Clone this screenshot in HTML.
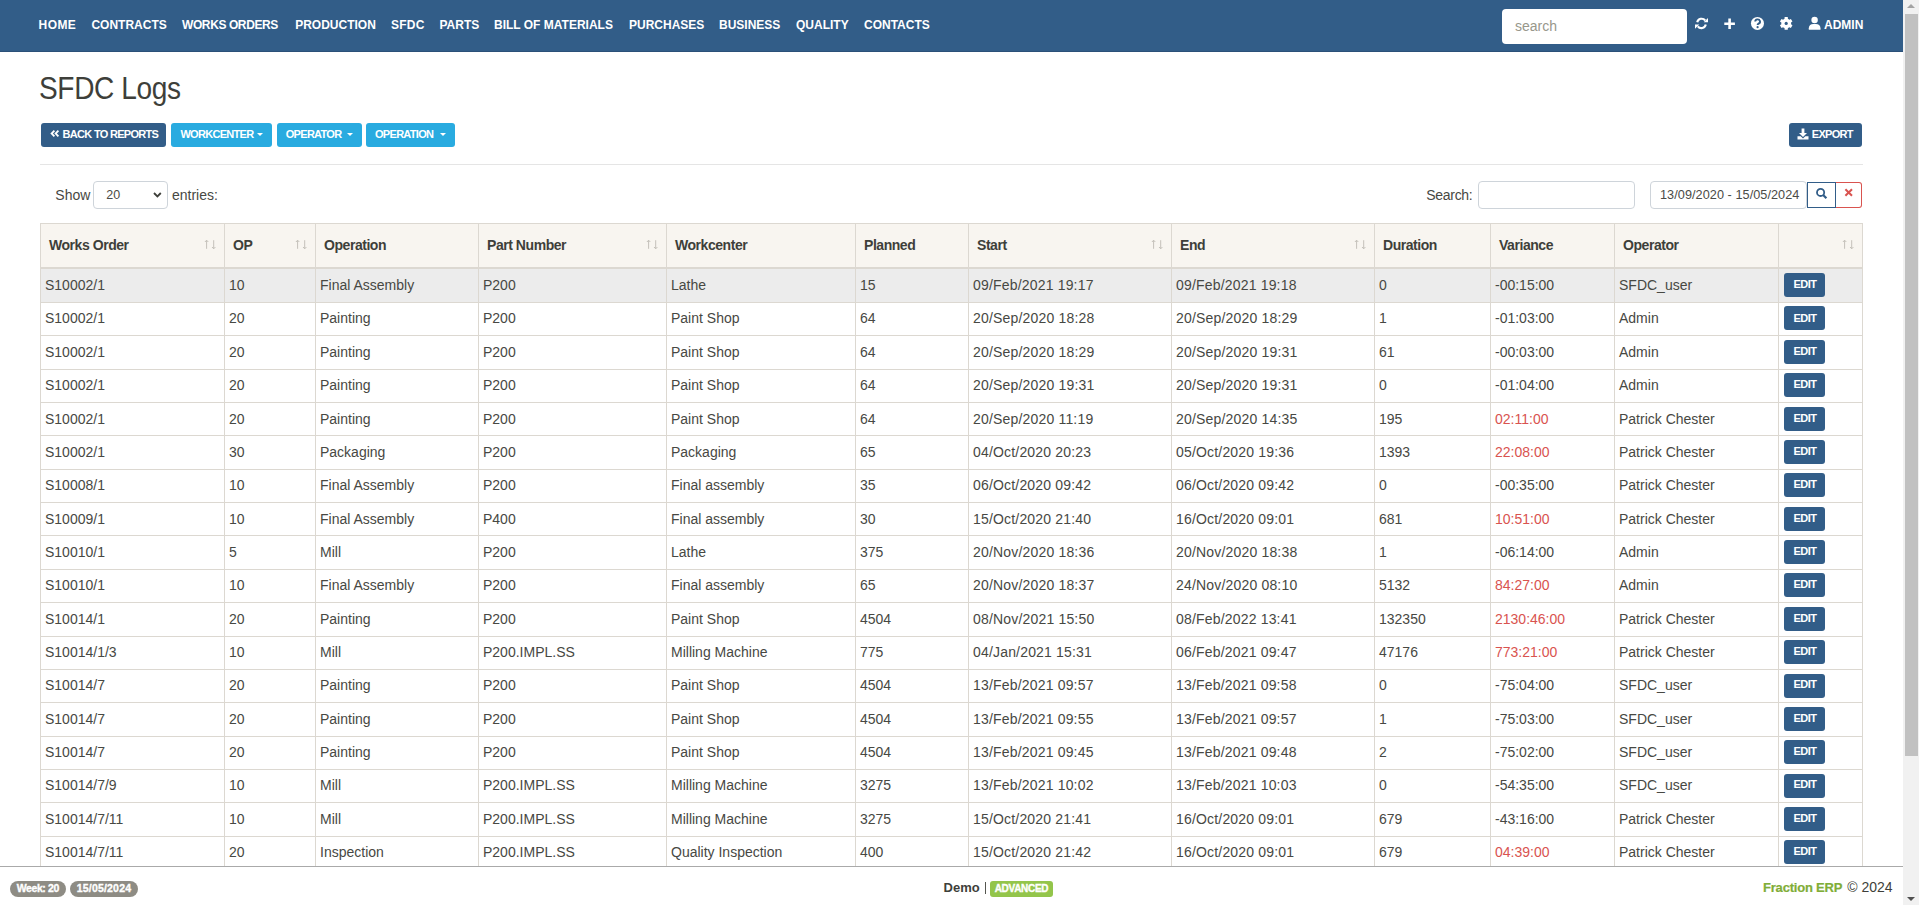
<!DOCTYPE html>
<html><head><meta charset="utf-8"><title>SFDC Logs</title>
<style>
html,body{margin:0;padding:0;}
body{width:1919px;height:905px;overflow:hidden;position:relative;background:#fff;font-family:"Liberation Sans",sans-serif;color:#3e3f3a;}
.t{position:absolute;white-space:nowrap;}
.b{font-weight:bold;}
.nav{position:absolute;left:0;top:0;width:1903px;height:51px;background:#325d88;border-bottom:1px solid #2b5078;}
.nl{color:#fff;font-weight:bold;}
.ln{position:absolute;background:#dcd8d1;}
.btn{position:absolute;border-radius:3px;color:#fff;font-weight:bold;font-size:11px;}
.edit{position:absolute;left:1784px;width:41px;height:24px;border-radius:3px;background:#325d88;}
.red{color:#d9534f;}
.sb{position:absolute;left:1903px;top:0;width:16px;height:905px;background:#f1f1f1;}
</style></head><body>

<div class="nav"></div>
<div class="t nl" style="left:38.6px;top:16.64px;font-size:12px;line-height:16px;letter-spacing:0.4px;">HOME</div>
<div class="t nl" style="left:91.4px;top:16.64px;font-size:12px;line-height:16px;">CONTRACTS</div>
<div class="t nl" style="left:182px;top:16.64px;font-size:12px;line-height:16px;letter-spacing:-0.4px;">WORKS ORDERS</div>
<div class="t nl" style="left:295.2px;top:16.64px;font-size:12px;line-height:16px;">PRODUCTION</div>
<div class="t nl" style="left:391px;top:16.64px;font-size:12px;line-height:16px;letter-spacing:0.25px;">SFDC</div>
<div class="t nl" style="left:439.5px;top:16.64px;font-size:12px;line-height:16px;">PARTS</div>
<div class="t nl" style="left:494px;top:16.64px;font-size:12px;line-height:16px;">BILL OF MATERIALS</div>
<div class="t nl" style="left:629px;top:16.64px;font-size:12px;line-height:16px;">PURCHASES</div>
<div class="t nl" style="left:719px;top:16.64px;font-size:12px;line-height:16px;">BUSINESS</div>
<div class="t nl" style="left:796px;top:16.64px;font-size:12px;line-height:16px;">QUALITY</div>
<div class="t nl" style="left:864px;top:16.64px;font-size:12px;line-height:16px;">CONTACTS</div>
<div style="position:absolute;left:1502px;top:9px;width:185px;height:35px;background:#fff;border-radius:4px;"></div>
<div class="t " style="left:1515px;top:17.15px;font-size:14px;line-height:18px;color:#98978b;">search</div>
<div class="t nl" style="left:1824px;top:16.64px;font-size:12px;line-height:16px;">ADMIN</div>
<svg style="position:absolute;left:0;top:0" width="1903" height="51">
<g fill="#fff">
 <path d="M1730.9 18.4h-2.6v4h-4v2.6h4v4h2.6v-4h4v-2.6h-4z"/>
 <circle cx="1757.45" cy="23.4" r="6.5"/>
 <path d="M1783.75 19.16 L1784.52 18.80 L1784.63 17.09 L1787.77 17.09 L1787.88 18.80 L1788.65 19.16 L1789.35 19.65 L1790.88 18.88 L1792.45 21.61 L1791.03 22.55 L1791.10 23.40 L1791.03 24.25 L1792.45 25.19 L1790.88 27.92 L1789.35 27.15 L1788.65 27.64 L1787.88 28.00 L1787.77 29.71 L1784.63 29.71 L1784.52 28.00 L1783.75 27.64 L1783.05 27.15 L1781.52 27.92 L1779.95 25.19 L1781.37 24.25 L1781.30 23.40 L1781.37 22.55 L1779.95 21.61 L1781.52 18.88 L1783.05 19.65Z"/>
 <circle cx="1814.6" cy="20" r="3.2"/>
 <path d="M1808.8 29.8v-1.6c0-2.6 2-4.2 4.5-4.2h2.6c2.5 0 4.6 1.6 4.6 4.2v1.6z"/>
</g>
<circle cx="1786.2" cy="23.4" r="1.6" fill="#325d88"/>
<g fill="none" stroke="#fff" stroke-width="2.1">
 <path d="M1697.2 22.3a4.5 4.5 0 0 1 8-1.8M1705.8 24.5a4.5 4.5 0 0 1-8 1.8"/>
</g>
<path d="M1708 18v4.3h-4.3z M1695 28.8v-4.3h4.3z" fill="#fff"/>
<path d="M1755.2 21.6a2.4 2.2 0 1 1 3.4 2c-.8.4-1 .8-1 1.5" fill="none" stroke="#325d88" stroke-width="1.9"/>
<circle cx="1757.6" cy="27.2" r="1.1" fill="#325d88"/>
</svg>
<div class="t " style="left:39px;top:68.86px;font-size:31px;line-height:40px;letter-spacing:-0.4px;transform:scaleX(0.905);transform-origin:0 0;">SFDC Logs</div>
<div class="btn" style="left:41px;top:123px;width:125px;height:24px;background:#325d88;"></div>
<div class="t nl" style="left:62.6px;top:127.39px;font-size:11px;line-height:14px;letter-spacing:-0.7px;">BACK TO REPORTS</div>
<svg style="position:absolute;left:50px;top:129px" width="10" height="10"><path d="M4.4 1.6L1.6 4.5 4.4 7.4M8.4 1.6L5.6 4.5 8.4 7.4" fill="none" stroke="#fff" stroke-width="1.8"/></svg>
<div class="btn" style="left:171px;top:123px;width:101px;height:24px;background:#29abe0;"></div>
<div class="t nl" style="left:180.4px;top:127.39px;font-size:11px;line-height:14px;letter-spacing:-0.7px;">WORKCENTER</div>
<div style="position:absolute;left:257px;top:133px;width:0;height:0;border-left:3px solid transparent;border-right:3px solid transparent;border-top:3px solid #fff;"></div>
<div class="btn" style="left:277px;top:123px;width:85px;height:24px;background:#29abe0;"></div>
<div class="t nl" style="left:285.75px;top:127.39px;font-size:11px;line-height:14px;letter-spacing:-0.7px;">OPERATOR</div>
<div style="position:absolute;left:347px;top:133px;width:0;height:0;border-left:3px solid transparent;border-right:3px solid transparent;border-top:3px solid #fff;"></div>
<div class="btn" style="left:366px;top:123px;width:88.5px;height:24px;background:#29abe0;"></div>
<div class="t nl" style="left:375px;top:127.39px;font-size:11px;line-height:14px;letter-spacing:-0.7px;">OPERATION</div>
<div style="position:absolute;left:439.5px;top:133px;width:0;height:0;border-left:3px solid transparent;border-right:3px solid transparent;border-top:3px solid #fff;"></div>
<div class="btn" style="left:1789px;top:123px;width:73px;height:24px;background:#325d88;"></div>
<div class="t nl" style="left:1811.75px;top:127.39px;font-size:11px;line-height:14px;letter-spacing:-0.7px;">EXPORT</div>
<svg style="position:absolute;left:1797px;top:128px" width="12" height="12"><path d="M4.6 0.5h2.8v4.5h2.6L6 9 2 5h2.6z" fill="#fff"/><path d="M0.5 8.2h3.2L6 10.4l2.3-2.2h3.2v3.3h-11z" fill="#fff"/></svg>
<div style="position:absolute;left:40px;top:164px;width:1823px;height:1px;background:#e5e5e5;"></div>
<div class="t " style="left:55.3px;top:185.95px;font-size:14px;line-height:18px;color:#474843;">Show</div>
<div style="position:absolute;left:93px;top:181px;width:73px;height:26px;border:1px solid #ced4da;border-radius:4px;background:#fff;"></div>
<div class="t " style="left:106.3px;top:186.97px;font-size:12.5px;line-height:16px;color:#4a4b46;">20</div>
<svg style="position:absolute;left:152px;top:190px" width="12" height="10"><path d="M2 3L5.4 6.5 8.8 3" fill="none" stroke="#3e3f3a" stroke-width="1.8"/></svg>
<div class="t " style="left:172px;top:185.95px;font-size:14px;line-height:18px;color:#474843;">entries:</div>
<div class="t " style="left:1426.3px;top:185.95px;font-size:14px;line-height:18px;letter-spacing:-0.3px;color:#474843;">Search:</div>
<div style="position:absolute;left:1478px;top:181px;width:155px;height:26px;border:1px solid #ced4da;border-radius:4px;background:#fff;"></div>
<div style="position:absolute;left:1650px;top:181px;width:155px;height:26px;border:1px solid #ced4da;border-radius:4px;background:#fff;"></div>
<div class="t " style="left:1660px;top:186.90px;font-size:12.7px;line-height:17px;color:#4a4b47;letter-spacing:0.05px;">13/09/2020 - 15/05/2024</div>
<div style="position:absolute;left:1807px;top:182px;width:27px;height:24px;border:1px solid #325d88;background:#fff;"></div>
<div style="position:absolute;left:1836px;top:182px;width:25px;height:24px;border:1px solid #d9534f;border-left:none;border-radius:0 3px 3px 0;background:#fff;"></div>
<svg style="position:absolute;left:1810px;top:184px" width="22" height="20"><circle cx="10.6" cy="8.4" r="3.6" fill="none" stroke="#325d88" stroke-width="1.8"/><path d="M13.2 11l3.2 3.2" stroke="#325d88" stroke-width="2.2"/></svg>
<svg style="position:absolute;left:1840px;top:184px" width="18" height="18"><path d="M5.4 5.2l6.6 6.6M12 5.2l-6.6 6.6" stroke="#d9534f" stroke-width="2"/></svg>
<div style="position:absolute;left:40px;top:223px;width:1823px;height:45px;background:#f8f5f0;"></div>
<div style="position:absolute;left:40px;top:269px;width:1823px;height:33px;background:#ececec;"></div>
<div class="ln" style="left:40px;top:223px;width:1823px;height:1px;"></div>
<div class="ln" style="left:40px;top:267px;width:1823px;height:2px;"></div>
<div class="ln" style="left:40px;top:302px;width:1823px;height:1px;"></div>
<div class="ln" style="left:40px;top:335px;width:1823px;height:1px;"></div>
<div class="ln" style="left:40px;top:369px;width:1823px;height:1px;"></div>
<div class="ln" style="left:40px;top:402px;width:1823px;height:1px;"></div>
<div class="ln" style="left:40px;top:435px;width:1823px;height:1px;"></div>
<div class="ln" style="left:40px;top:469px;width:1823px;height:1px;"></div>
<div class="ln" style="left:40px;top:502px;width:1823px;height:1px;"></div>
<div class="ln" style="left:40px;top:535px;width:1823px;height:1px;"></div>
<div class="ln" style="left:40px;top:569px;width:1823px;height:1px;"></div>
<div class="ln" style="left:40px;top:602px;width:1823px;height:1px;"></div>
<div class="ln" style="left:40px;top:636px;width:1823px;height:1px;"></div>
<div class="ln" style="left:40px;top:669px;width:1823px;height:1px;"></div>
<div class="ln" style="left:40px;top:702px;width:1823px;height:1px;"></div>
<div class="ln" style="left:40px;top:736px;width:1823px;height:1px;"></div>
<div class="ln" style="left:40px;top:769px;width:1823px;height:1px;"></div>
<div class="ln" style="left:40px;top:802px;width:1823px;height:1px;"></div>
<div class="ln" style="left:40px;top:836px;width:1823px;height:1px;"></div>
<div class="ln" style="left:40px;top:869px;width:1823px;height:1px;"></div>
<div class="ln" style="left:40px;top:223px;width:1px;height:660px;"></div>
<div class="ln" style="left:224px;top:223px;width:1px;height:660px;"></div>
<div class="ln" style="left:315px;top:223px;width:1px;height:660px;"></div>
<div class="ln" style="left:478px;top:223px;width:1px;height:660px;"></div>
<div class="ln" style="left:666px;top:223px;width:1px;height:660px;"></div>
<div class="ln" style="left:855px;top:223px;width:1px;height:660px;"></div>
<div class="ln" style="left:968px;top:223px;width:1px;height:660px;"></div>
<div class="ln" style="left:1171px;top:223px;width:1px;height:660px;"></div>
<div class="ln" style="left:1374px;top:223px;width:1px;height:660px;"></div>
<div class="ln" style="left:1490px;top:223px;width:1px;height:660px;"></div>
<div class="ln" style="left:1614px;top:223px;width:1px;height:660px;"></div>
<div class="ln" style="left:1778px;top:223px;width:1px;height:660px;"></div>
<div class="ln" style="left:1862px;top:223px;width:1px;height:660px;"></div>
<div class="t b" style="left:49px;top:236.15px;font-size:14px;line-height:18px;letter-spacing:-0.45px;">Works Order</div>
<svg style="position:absolute;left:202px;top:238px" width="16" height="14"><path d="M4.6 2.2v8.6M2.9 4l1.7-1.8 1.7 1.8M11.7 2.2v8.6M10 9l1.7 1.8 1.7-1.8" fill="none" stroke="#c4c1ba" stroke-width="1"/></svg>
<div class="t b" style="left:233px;top:236.15px;font-size:14px;line-height:18px;letter-spacing:-0.45px;">OP</div>
<svg style="position:absolute;left:293px;top:238px" width="16" height="14"><path d="M4.6 2.2v8.6M2.9 4l1.7-1.8 1.7 1.8M11.7 2.2v8.6M10 9l1.7 1.8 1.7-1.8" fill="none" stroke="#c4c1ba" stroke-width="1"/></svg>
<div class="t b" style="left:324px;top:236.15px;font-size:14px;line-height:18px;letter-spacing:-0.45px;">Operation</div>
<div class="t b" style="left:487px;top:236.15px;font-size:14px;line-height:18px;letter-spacing:-0.45px;">Part Number</div>
<svg style="position:absolute;left:644px;top:238px" width="16" height="14"><path d="M4.6 2.2v8.6M2.9 4l1.7-1.8 1.7 1.8M11.7 2.2v8.6M10 9l1.7 1.8 1.7-1.8" fill="none" stroke="#c4c1ba" stroke-width="1"/></svg>
<div class="t b" style="left:675px;top:236.15px;font-size:14px;line-height:18px;letter-spacing:-0.45px;">Workcenter</div>
<div class="t b" style="left:864px;top:236.15px;font-size:14px;line-height:18px;letter-spacing:-0.45px;">Planned</div>
<div class="t b" style="left:977px;top:236.15px;font-size:14px;line-height:18px;letter-spacing:-0.45px;">Start</div>
<svg style="position:absolute;left:1149px;top:238px" width="16" height="14"><path d="M4.6 2.2v8.6M2.9 4l1.7-1.8 1.7 1.8M11.7 2.2v8.6M10 9l1.7 1.8 1.7-1.8" fill="none" stroke="#c4c1ba" stroke-width="1"/></svg>
<div class="t b" style="left:1180px;top:236.15px;font-size:14px;line-height:18px;letter-spacing:-0.45px;">End</div>
<svg style="position:absolute;left:1352px;top:238px" width="16" height="14"><path d="M4.6 2.2v8.6M2.9 4l1.7-1.8 1.7 1.8M11.7 2.2v8.6M10 9l1.7 1.8 1.7-1.8" fill="none" stroke="#c4c1ba" stroke-width="1"/></svg>
<div class="t b" style="left:1383px;top:236.15px;font-size:14px;line-height:18px;letter-spacing:-0.45px;">Duration</div>
<div class="t b" style="left:1499px;top:236.15px;font-size:14px;line-height:18px;letter-spacing:-0.45px;">Variance</div>
<div class="t b" style="left:1623px;top:236.15px;font-size:14px;line-height:18px;letter-spacing:-0.45px;">Operator</div>
<svg style="position:absolute;left:1840px;top:238px" width="16" height="14"><path d="M4.6 2.2v8.6M2.9 4l1.7-1.8 1.7 1.8M11.7 2.2v8.6M10 9l1.7 1.8 1.7-1.8" fill="none" stroke="#c4c1ba" stroke-width="1"/></svg>
<div class="t " style="left:45px;top:276.15px;font-size:14px;line-height:18px;color:#474843;">S10002/1</div>
<div class="t " style="left:229px;top:276.15px;font-size:14px;line-height:18px;color:#474843;">10</div>
<div class="t " style="left:320px;top:276.15px;font-size:14px;line-height:18px;color:#474843;">Final Assembly</div>
<div class="t " style="left:483px;top:276.15px;font-size:14px;line-height:18px;color:#474843;">P200</div>
<div class="t " style="left:671px;top:276.15px;font-size:14px;line-height:18px;color:#474843;">Lathe</div>
<div class="t " style="left:860px;top:276.15px;font-size:14px;line-height:18px;color:#474843;">15</div>
<div class="t " style="left:973px;top:276.15px;font-size:14px;line-height:18px;letter-spacing:0.18px;color:#474843;">09/Feb/2021 19:17</div>
<div class="t " style="left:1176px;top:276.15px;font-size:14px;line-height:18px;letter-spacing:0.18px;color:#474843;">09/Feb/2021 19:18</div>
<div class="t " style="left:1379px;top:276.15px;font-size:14px;line-height:18px;color:#474843;">0</div>
<div class="t " style="left:1495px;top:276.15px;font-size:14px;line-height:18px;color:#474843;">-00:15:00</div>
<div class="t " style="left:1619px;top:276.15px;font-size:14px;line-height:18px;color:#474843;">SFDC_user</div>
<div class="edit" style="top:273px;"></div>
<div class="t nl" style="left:1793.6px;top:277.19px;font-size:11px;line-height:14px;letter-spacing:-0.6px;">EDIT</div>
<div class="t " style="left:45px;top:309.49px;font-size:14px;line-height:18px;color:#474843;">S10002/1</div>
<div class="t " style="left:229px;top:309.49px;font-size:14px;line-height:18px;color:#474843;">20</div>
<div class="t " style="left:320px;top:309.49px;font-size:14px;line-height:18px;color:#474843;">Painting</div>
<div class="t " style="left:483px;top:309.49px;font-size:14px;line-height:18px;color:#474843;">P200</div>
<div class="t " style="left:671px;top:309.49px;font-size:14px;line-height:18px;color:#474843;">Paint Shop</div>
<div class="t " style="left:860px;top:309.49px;font-size:14px;line-height:18px;color:#474843;">64</div>
<div class="t " style="left:973px;top:309.49px;font-size:14px;line-height:18px;letter-spacing:0.18px;color:#474843;">20/Sep/2020 18:28</div>
<div class="t " style="left:1176px;top:309.49px;font-size:14px;line-height:18px;letter-spacing:0.18px;color:#474843;">20/Sep/2020 18:29</div>
<div class="t " style="left:1379px;top:309.49px;font-size:14px;line-height:18px;color:#474843;">1</div>
<div class="t " style="left:1495px;top:309.49px;font-size:14px;line-height:18px;color:#474843;">-01:03:00</div>
<div class="t " style="left:1619px;top:309.49px;font-size:14px;line-height:18px;color:#474843;">Admin</div>
<div class="edit" style="top:306px;"></div>
<div class="t nl" style="left:1793.6px;top:310.53px;font-size:11px;line-height:14px;letter-spacing:-0.6px;">EDIT</div>
<div class="t " style="left:45px;top:342.83px;font-size:14px;line-height:18px;color:#474843;">S10002/1</div>
<div class="t " style="left:229px;top:342.83px;font-size:14px;line-height:18px;color:#474843;">20</div>
<div class="t " style="left:320px;top:342.83px;font-size:14px;line-height:18px;color:#474843;">Painting</div>
<div class="t " style="left:483px;top:342.83px;font-size:14px;line-height:18px;color:#474843;">P200</div>
<div class="t " style="left:671px;top:342.83px;font-size:14px;line-height:18px;color:#474843;">Paint Shop</div>
<div class="t " style="left:860px;top:342.83px;font-size:14px;line-height:18px;color:#474843;">64</div>
<div class="t " style="left:973px;top:342.83px;font-size:14px;line-height:18px;letter-spacing:0.18px;color:#474843;">20/Sep/2020 18:29</div>
<div class="t " style="left:1176px;top:342.83px;font-size:14px;line-height:18px;letter-spacing:0.18px;color:#474843;">20/Sep/2020 19:31</div>
<div class="t " style="left:1379px;top:342.83px;font-size:14px;line-height:18px;color:#474843;">61</div>
<div class="t " style="left:1495px;top:342.83px;font-size:14px;line-height:18px;color:#474843;">-00:03:00</div>
<div class="t " style="left:1619px;top:342.83px;font-size:14px;line-height:18px;color:#474843;">Admin</div>
<div class="edit" style="top:340px;"></div>
<div class="t nl" style="left:1793.6px;top:343.87px;font-size:11px;line-height:14px;letter-spacing:-0.6px;">EDIT</div>
<div class="t " style="left:45px;top:376.17px;font-size:14px;line-height:18px;color:#474843;">S10002/1</div>
<div class="t " style="left:229px;top:376.17px;font-size:14px;line-height:18px;color:#474843;">20</div>
<div class="t " style="left:320px;top:376.17px;font-size:14px;line-height:18px;color:#474843;">Painting</div>
<div class="t " style="left:483px;top:376.17px;font-size:14px;line-height:18px;color:#474843;">P200</div>
<div class="t " style="left:671px;top:376.17px;font-size:14px;line-height:18px;color:#474843;">Paint Shop</div>
<div class="t " style="left:860px;top:376.17px;font-size:14px;line-height:18px;color:#474843;">64</div>
<div class="t " style="left:973px;top:376.17px;font-size:14px;line-height:18px;letter-spacing:0.18px;color:#474843;">20/Sep/2020 19:31</div>
<div class="t " style="left:1176px;top:376.17px;font-size:14px;line-height:18px;letter-spacing:0.18px;color:#474843;">20/Sep/2020 19:31</div>
<div class="t " style="left:1379px;top:376.17px;font-size:14px;line-height:18px;color:#474843;">0</div>
<div class="t " style="left:1495px;top:376.17px;font-size:14px;line-height:18px;color:#474843;">-01:04:00</div>
<div class="t " style="left:1619px;top:376.17px;font-size:14px;line-height:18px;color:#474843;">Admin</div>
<div class="edit" style="top:373px;"></div>
<div class="t nl" style="left:1793.6px;top:377.21px;font-size:11px;line-height:14px;letter-spacing:-0.6px;">EDIT</div>
<div class="t " style="left:45px;top:409.51px;font-size:14px;line-height:18px;color:#474843;">S10002/1</div>
<div class="t " style="left:229px;top:409.51px;font-size:14px;line-height:18px;color:#474843;">20</div>
<div class="t " style="left:320px;top:409.51px;font-size:14px;line-height:18px;color:#474843;">Painting</div>
<div class="t " style="left:483px;top:409.51px;font-size:14px;line-height:18px;color:#474843;">P200</div>
<div class="t " style="left:671px;top:409.51px;font-size:14px;line-height:18px;color:#474843;">Paint Shop</div>
<div class="t " style="left:860px;top:409.51px;font-size:14px;line-height:18px;color:#474843;">64</div>
<div class="t " style="left:973px;top:409.51px;font-size:14px;line-height:18px;letter-spacing:0.18px;color:#474843;">20/Sep/2020 11:19</div>
<div class="t " style="left:1176px;top:409.51px;font-size:14px;line-height:18px;letter-spacing:0.18px;color:#474843;">20/Sep/2020 14:35</div>
<div class="t " style="left:1379px;top:409.51px;font-size:14px;line-height:18px;color:#474843;">195</div>
<div class="t red" style="left:1495px;top:409.51px;font-size:14px;line-height:18px;">02:11:00</div>
<div class="t " style="left:1619px;top:409.51px;font-size:14px;line-height:18px;color:#474843;">Patrick Chester</div>
<div class="edit" style="top:407px;"></div>
<div class="t nl" style="left:1793.6px;top:410.55px;font-size:11px;line-height:14px;letter-spacing:-0.6px;">EDIT</div>
<div class="t " style="left:45px;top:442.85px;font-size:14px;line-height:18px;color:#474843;">S10002/1</div>
<div class="t " style="left:229px;top:442.85px;font-size:14px;line-height:18px;color:#474843;">30</div>
<div class="t " style="left:320px;top:442.85px;font-size:14px;line-height:18px;color:#474843;">Packaging</div>
<div class="t " style="left:483px;top:442.85px;font-size:14px;line-height:18px;color:#474843;">P200</div>
<div class="t " style="left:671px;top:442.85px;font-size:14px;line-height:18px;color:#474843;">Packaging</div>
<div class="t " style="left:860px;top:442.85px;font-size:14px;line-height:18px;color:#474843;">65</div>
<div class="t " style="left:973px;top:442.85px;font-size:14px;line-height:18px;letter-spacing:0.18px;color:#474843;">04/Oct/2020 20:23</div>
<div class="t " style="left:1176px;top:442.85px;font-size:14px;line-height:18px;letter-spacing:0.18px;color:#474843;">05/Oct/2020 19:36</div>
<div class="t " style="left:1379px;top:442.85px;font-size:14px;line-height:18px;color:#474843;">1393</div>
<div class="t red" style="left:1495px;top:442.85px;font-size:14px;line-height:18px;">22:08:00</div>
<div class="t " style="left:1619px;top:442.85px;font-size:14px;line-height:18px;color:#474843;">Patrick Chester</div>
<div class="edit" style="top:440px;"></div>
<div class="t nl" style="left:1793.6px;top:443.89px;font-size:11px;line-height:14px;letter-spacing:-0.6px;">EDIT</div>
<div class="t " style="left:45px;top:476.19px;font-size:14px;line-height:18px;color:#474843;">S10008/1</div>
<div class="t " style="left:229px;top:476.19px;font-size:14px;line-height:18px;color:#474843;">10</div>
<div class="t " style="left:320px;top:476.19px;font-size:14px;line-height:18px;color:#474843;">Final Assembly</div>
<div class="t " style="left:483px;top:476.19px;font-size:14px;line-height:18px;color:#474843;">P200</div>
<div class="t " style="left:671px;top:476.19px;font-size:14px;line-height:18px;color:#474843;">Final assembly</div>
<div class="t " style="left:860px;top:476.19px;font-size:14px;line-height:18px;color:#474843;">35</div>
<div class="t " style="left:973px;top:476.19px;font-size:14px;line-height:18px;letter-spacing:0.18px;color:#474843;">06/Oct/2020 09:42</div>
<div class="t " style="left:1176px;top:476.19px;font-size:14px;line-height:18px;letter-spacing:0.18px;color:#474843;">06/Oct/2020 09:42</div>
<div class="t " style="left:1379px;top:476.19px;font-size:14px;line-height:18px;color:#474843;">0</div>
<div class="t " style="left:1495px;top:476.19px;font-size:14px;line-height:18px;color:#474843;">-00:35:00</div>
<div class="t " style="left:1619px;top:476.19px;font-size:14px;line-height:18px;color:#474843;">Patrick Chester</div>
<div class="edit" style="top:473px;"></div>
<div class="t nl" style="left:1793.6px;top:477.23px;font-size:11px;line-height:14px;letter-spacing:-0.6px;">EDIT</div>
<div class="t " style="left:45px;top:509.53px;font-size:14px;line-height:18px;color:#474843;">S10009/1</div>
<div class="t " style="left:229px;top:509.53px;font-size:14px;line-height:18px;color:#474843;">10</div>
<div class="t " style="left:320px;top:509.53px;font-size:14px;line-height:18px;color:#474843;">Final Assembly</div>
<div class="t " style="left:483px;top:509.53px;font-size:14px;line-height:18px;color:#474843;">P400</div>
<div class="t " style="left:671px;top:509.53px;font-size:14px;line-height:18px;color:#474843;">Final assembly</div>
<div class="t " style="left:860px;top:509.53px;font-size:14px;line-height:18px;color:#474843;">30</div>
<div class="t " style="left:973px;top:509.53px;font-size:14px;line-height:18px;letter-spacing:0.18px;color:#474843;">15/Oct/2020 21:40</div>
<div class="t " style="left:1176px;top:509.53px;font-size:14px;line-height:18px;letter-spacing:0.18px;color:#474843;">16/Oct/2020 09:01</div>
<div class="t " style="left:1379px;top:509.53px;font-size:14px;line-height:18px;color:#474843;">681</div>
<div class="t red" style="left:1495px;top:509.53px;font-size:14px;line-height:18px;">10:51:00</div>
<div class="t " style="left:1619px;top:509.53px;font-size:14px;line-height:18px;color:#474843;">Patrick Chester</div>
<div class="edit" style="top:507px;"></div>
<div class="t nl" style="left:1793.6px;top:510.57px;font-size:11px;line-height:14px;letter-spacing:-0.6px;">EDIT</div>
<div class="t " style="left:45px;top:542.87px;font-size:14px;line-height:18px;color:#474843;">S10010/1</div>
<div class="t " style="left:229px;top:542.87px;font-size:14px;line-height:18px;color:#474843;">5</div>
<div class="t " style="left:320px;top:542.87px;font-size:14px;line-height:18px;color:#474843;">Mill</div>
<div class="t " style="left:483px;top:542.87px;font-size:14px;line-height:18px;color:#474843;">P200</div>
<div class="t " style="left:671px;top:542.87px;font-size:14px;line-height:18px;color:#474843;">Lathe</div>
<div class="t " style="left:860px;top:542.87px;font-size:14px;line-height:18px;color:#474843;">375</div>
<div class="t " style="left:973px;top:542.87px;font-size:14px;line-height:18px;letter-spacing:0.18px;color:#474843;">20/Nov/2020 18:36</div>
<div class="t " style="left:1176px;top:542.87px;font-size:14px;line-height:18px;letter-spacing:0.18px;color:#474843;">20/Nov/2020 18:38</div>
<div class="t " style="left:1379px;top:542.87px;font-size:14px;line-height:18px;color:#474843;">1</div>
<div class="t " style="left:1495px;top:542.87px;font-size:14px;line-height:18px;color:#474843;">-06:14:00</div>
<div class="t " style="left:1619px;top:542.87px;font-size:14px;line-height:18px;color:#474843;">Admin</div>
<div class="edit" style="top:540px;"></div>
<div class="t nl" style="left:1793.6px;top:543.91px;font-size:11px;line-height:14px;letter-spacing:-0.6px;">EDIT</div>
<div class="t " style="left:45px;top:576.21px;font-size:14px;line-height:18px;color:#474843;">S10010/1</div>
<div class="t " style="left:229px;top:576.21px;font-size:14px;line-height:18px;color:#474843;">10</div>
<div class="t " style="left:320px;top:576.21px;font-size:14px;line-height:18px;color:#474843;">Final Assembly</div>
<div class="t " style="left:483px;top:576.21px;font-size:14px;line-height:18px;color:#474843;">P200</div>
<div class="t " style="left:671px;top:576.21px;font-size:14px;line-height:18px;color:#474843;">Final assembly</div>
<div class="t " style="left:860px;top:576.21px;font-size:14px;line-height:18px;color:#474843;">65</div>
<div class="t " style="left:973px;top:576.21px;font-size:14px;line-height:18px;letter-spacing:0.18px;color:#474843;">20/Nov/2020 18:37</div>
<div class="t " style="left:1176px;top:576.21px;font-size:14px;line-height:18px;letter-spacing:0.18px;color:#474843;">24/Nov/2020 08:10</div>
<div class="t " style="left:1379px;top:576.21px;font-size:14px;line-height:18px;color:#474843;">5132</div>
<div class="t red" style="left:1495px;top:576.21px;font-size:14px;line-height:18px;">84:27:00</div>
<div class="t " style="left:1619px;top:576.21px;font-size:14px;line-height:18px;color:#474843;">Admin</div>
<div class="edit" style="top:573px;"></div>
<div class="t nl" style="left:1793.6px;top:577.25px;font-size:11px;line-height:14px;letter-spacing:-0.6px;">EDIT</div>
<div class="t " style="left:45px;top:609.55px;font-size:14px;line-height:18px;color:#474843;">S10014/1</div>
<div class="t " style="left:229px;top:609.55px;font-size:14px;line-height:18px;color:#474843;">20</div>
<div class="t " style="left:320px;top:609.55px;font-size:14px;line-height:18px;color:#474843;">Painting</div>
<div class="t " style="left:483px;top:609.55px;font-size:14px;line-height:18px;color:#474843;">P200</div>
<div class="t " style="left:671px;top:609.55px;font-size:14px;line-height:18px;color:#474843;">Paint Shop</div>
<div class="t " style="left:860px;top:609.55px;font-size:14px;line-height:18px;color:#474843;">4504</div>
<div class="t " style="left:973px;top:609.55px;font-size:14px;line-height:18px;letter-spacing:0.18px;color:#474843;">08/Nov/2021 15:50</div>
<div class="t " style="left:1176px;top:609.55px;font-size:14px;line-height:18px;letter-spacing:0.18px;color:#474843;">08/Feb/2022 13:41</div>
<div class="t " style="left:1379px;top:609.55px;font-size:14px;line-height:18px;color:#474843;">132350</div>
<div class="t red" style="left:1495px;top:609.55px;font-size:14px;line-height:18px;">2130:46:00</div>
<div class="t " style="left:1619px;top:609.55px;font-size:14px;line-height:18px;color:#474843;">Patrick Chester</div>
<div class="edit" style="top:607px;"></div>
<div class="t nl" style="left:1793.6px;top:610.59px;font-size:11px;line-height:14px;letter-spacing:-0.6px;">EDIT</div>
<div class="t " style="left:45px;top:642.89px;font-size:14px;line-height:18px;color:#474843;">S10014/1/3</div>
<div class="t " style="left:229px;top:642.89px;font-size:14px;line-height:18px;color:#474843;">10</div>
<div class="t " style="left:320px;top:642.89px;font-size:14px;line-height:18px;color:#474843;">Mill</div>
<div class="t " style="left:483px;top:642.89px;font-size:14px;line-height:18px;color:#474843;">P200.IMPL.SS</div>
<div class="t " style="left:671px;top:642.89px;font-size:14px;line-height:18px;color:#474843;">Milling Machine</div>
<div class="t " style="left:860px;top:642.89px;font-size:14px;line-height:18px;color:#474843;">775</div>
<div class="t " style="left:973px;top:642.89px;font-size:14px;line-height:18px;letter-spacing:0.18px;color:#474843;">04/Jan/2021 15:31</div>
<div class="t " style="left:1176px;top:642.89px;font-size:14px;line-height:18px;letter-spacing:0.18px;color:#474843;">06/Feb/2021 09:47</div>
<div class="t " style="left:1379px;top:642.89px;font-size:14px;line-height:18px;color:#474843;">47176</div>
<div class="t red" style="left:1495px;top:642.89px;font-size:14px;line-height:18px;">773:21:00</div>
<div class="t " style="left:1619px;top:642.89px;font-size:14px;line-height:18px;color:#474843;">Patrick Chester</div>
<div class="edit" style="top:640px;"></div>
<div class="t nl" style="left:1793.6px;top:643.93px;font-size:11px;line-height:14px;letter-spacing:-0.6px;">EDIT</div>
<div class="t " style="left:45px;top:676.23px;font-size:14px;line-height:18px;color:#474843;">S10014/7</div>
<div class="t " style="left:229px;top:676.23px;font-size:14px;line-height:18px;color:#474843;">20</div>
<div class="t " style="left:320px;top:676.23px;font-size:14px;line-height:18px;color:#474843;">Painting</div>
<div class="t " style="left:483px;top:676.23px;font-size:14px;line-height:18px;color:#474843;">P200</div>
<div class="t " style="left:671px;top:676.23px;font-size:14px;line-height:18px;color:#474843;">Paint Shop</div>
<div class="t " style="left:860px;top:676.23px;font-size:14px;line-height:18px;color:#474843;">4504</div>
<div class="t " style="left:973px;top:676.23px;font-size:14px;line-height:18px;letter-spacing:0.18px;color:#474843;">13/Feb/2021 09:57</div>
<div class="t " style="left:1176px;top:676.23px;font-size:14px;line-height:18px;letter-spacing:0.18px;color:#474843;">13/Feb/2021 09:58</div>
<div class="t " style="left:1379px;top:676.23px;font-size:14px;line-height:18px;color:#474843;">0</div>
<div class="t " style="left:1495px;top:676.23px;font-size:14px;line-height:18px;color:#474843;">-75:04:00</div>
<div class="t " style="left:1619px;top:676.23px;font-size:14px;line-height:18px;color:#474843;">SFDC_user</div>
<div class="edit" style="top:674px;"></div>
<div class="t nl" style="left:1793.6px;top:677.27px;font-size:11px;line-height:14px;letter-spacing:-0.6px;">EDIT</div>
<div class="t " style="left:45px;top:709.57px;font-size:14px;line-height:18px;color:#474843;">S10014/7</div>
<div class="t " style="left:229px;top:709.57px;font-size:14px;line-height:18px;color:#474843;">20</div>
<div class="t " style="left:320px;top:709.57px;font-size:14px;line-height:18px;color:#474843;">Painting</div>
<div class="t " style="left:483px;top:709.57px;font-size:14px;line-height:18px;color:#474843;">P200</div>
<div class="t " style="left:671px;top:709.57px;font-size:14px;line-height:18px;color:#474843;">Paint Shop</div>
<div class="t " style="left:860px;top:709.57px;font-size:14px;line-height:18px;color:#474843;">4504</div>
<div class="t " style="left:973px;top:709.57px;font-size:14px;line-height:18px;letter-spacing:0.18px;color:#474843;">13/Feb/2021 09:55</div>
<div class="t " style="left:1176px;top:709.57px;font-size:14px;line-height:18px;letter-spacing:0.18px;color:#474843;">13/Feb/2021 09:57</div>
<div class="t " style="left:1379px;top:709.57px;font-size:14px;line-height:18px;color:#474843;">1</div>
<div class="t " style="left:1495px;top:709.57px;font-size:14px;line-height:18px;color:#474843;">-75:03:00</div>
<div class="t " style="left:1619px;top:709.57px;font-size:14px;line-height:18px;color:#474843;">SFDC_user</div>
<div class="edit" style="top:707px;"></div>
<div class="t nl" style="left:1793.6px;top:710.61px;font-size:11px;line-height:14px;letter-spacing:-0.6px;">EDIT</div>
<div class="t " style="left:45px;top:742.91px;font-size:14px;line-height:18px;color:#474843;">S10014/7</div>
<div class="t " style="left:229px;top:742.91px;font-size:14px;line-height:18px;color:#474843;">20</div>
<div class="t " style="left:320px;top:742.91px;font-size:14px;line-height:18px;color:#474843;">Painting</div>
<div class="t " style="left:483px;top:742.91px;font-size:14px;line-height:18px;color:#474843;">P200</div>
<div class="t " style="left:671px;top:742.91px;font-size:14px;line-height:18px;color:#474843;">Paint Shop</div>
<div class="t " style="left:860px;top:742.91px;font-size:14px;line-height:18px;color:#474843;">4504</div>
<div class="t " style="left:973px;top:742.91px;font-size:14px;line-height:18px;letter-spacing:0.18px;color:#474843;">13/Feb/2021 09:45</div>
<div class="t " style="left:1176px;top:742.91px;font-size:14px;line-height:18px;letter-spacing:0.18px;color:#474843;">13/Feb/2021 09:48</div>
<div class="t " style="left:1379px;top:742.91px;font-size:14px;line-height:18px;color:#474843;">2</div>
<div class="t " style="left:1495px;top:742.91px;font-size:14px;line-height:18px;color:#474843;">-75:02:00</div>
<div class="t " style="left:1619px;top:742.91px;font-size:14px;line-height:18px;color:#474843;">SFDC_user</div>
<div class="edit" style="top:740px;"></div>
<div class="t nl" style="left:1793.6px;top:743.95px;font-size:11px;line-height:14px;letter-spacing:-0.6px;">EDIT</div>
<div class="t " style="left:45px;top:776.25px;font-size:14px;line-height:18px;color:#474843;">S10014/7/9</div>
<div class="t " style="left:229px;top:776.25px;font-size:14px;line-height:18px;color:#474843;">10</div>
<div class="t " style="left:320px;top:776.25px;font-size:14px;line-height:18px;color:#474843;">Mill</div>
<div class="t " style="left:483px;top:776.25px;font-size:14px;line-height:18px;color:#474843;">P200.IMPL.SS</div>
<div class="t " style="left:671px;top:776.25px;font-size:14px;line-height:18px;color:#474843;">Milling Machine</div>
<div class="t " style="left:860px;top:776.25px;font-size:14px;line-height:18px;color:#474843;">3275</div>
<div class="t " style="left:973px;top:776.25px;font-size:14px;line-height:18px;letter-spacing:0.18px;color:#474843;">13/Feb/2021 10:02</div>
<div class="t " style="left:1176px;top:776.25px;font-size:14px;line-height:18px;letter-spacing:0.18px;color:#474843;">13/Feb/2021 10:03</div>
<div class="t " style="left:1379px;top:776.25px;font-size:14px;line-height:18px;color:#474843;">0</div>
<div class="t " style="left:1495px;top:776.25px;font-size:14px;line-height:18px;color:#474843;">-54:35:00</div>
<div class="t " style="left:1619px;top:776.25px;font-size:14px;line-height:18px;color:#474843;">SFDC_user</div>
<div class="edit" style="top:774px;"></div>
<div class="t nl" style="left:1793.6px;top:777.29px;font-size:11px;line-height:14px;letter-spacing:-0.6px;">EDIT</div>
<div class="t " style="left:45px;top:809.59px;font-size:14px;line-height:18px;color:#474843;">S10014/7/11</div>
<div class="t " style="left:229px;top:809.59px;font-size:14px;line-height:18px;color:#474843;">10</div>
<div class="t " style="left:320px;top:809.59px;font-size:14px;line-height:18px;color:#474843;">Mill</div>
<div class="t " style="left:483px;top:809.59px;font-size:14px;line-height:18px;color:#474843;">P200.IMPL.SS</div>
<div class="t " style="left:671px;top:809.59px;font-size:14px;line-height:18px;color:#474843;">Milling Machine</div>
<div class="t " style="left:860px;top:809.59px;font-size:14px;line-height:18px;color:#474843;">3275</div>
<div class="t " style="left:973px;top:809.59px;font-size:14px;line-height:18px;letter-spacing:0.18px;color:#474843;">15/Oct/2020 21:41</div>
<div class="t " style="left:1176px;top:809.59px;font-size:14px;line-height:18px;letter-spacing:0.18px;color:#474843;">16/Oct/2020 09:01</div>
<div class="t " style="left:1379px;top:809.59px;font-size:14px;line-height:18px;color:#474843;">679</div>
<div class="t " style="left:1495px;top:809.59px;font-size:14px;line-height:18px;color:#474843;">-43:16:00</div>
<div class="t " style="left:1619px;top:809.59px;font-size:14px;line-height:18px;color:#474843;">Patrick Chester</div>
<div class="edit" style="top:807px;"></div>
<div class="t nl" style="left:1793.6px;top:810.63px;font-size:11px;line-height:14px;letter-spacing:-0.6px;">EDIT</div>
<div class="t " style="left:45px;top:842.93px;font-size:14px;line-height:18px;color:#474843;">S10014/7/11</div>
<div class="t " style="left:229px;top:842.93px;font-size:14px;line-height:18px;color:#474843;">20</div>
<div class="t " style="left:320px;top:842.93px;font-size:14px;line-height:18px;color:#474843;">Inspection</div>
<div class="t " style="left:483px;top:842.93px;font-size:14px;line-height:18px;color:#474843;">P200.IMPL.SS</div>
<div class="t " style="left:671px;top:842.93px;font-size:14px;line-height:18px;color:#474843;">Quality Inspection</div>
<div class="t " style="left:860px;top:842.93px;font-size:14px;line-height:18px;color:#474843;">400</div>
<div class="t " style="left:973px;top:842.93px;font-size:14px;line-height:18px;letter-spacing:0.18px;color:#474843;">15/Oct/2020 21:42</div>
<div class="t " style="left:1176px;top:842.93px;font-size:14px;line-height:18px;letter-spacing:0.18px;color:#474843;">16/Oct/2020 09:01</div>
<div class="t " style="left:1379px;top:842.93px;font-size:14px;line-height:18px;color:#474843;">679</div>
<div class="t red" style="left:1495px;top:842.93px;font-size:14px;line-height:18px;">04:39:00</div>
<div class="t " style="left:1619px;top:842.93px;font-size:14px;line-height:18px;color:#474843;">Patrick Chester</div>
<div class="edit" style="top:840px;"></div>
<div class="t nl" style="left:1793.6px;top:843.97px;font-size:11px;line-height:14px;letter-spacing:-0.6px;">EDIT</div>
<div style="position:absolute;left:0;top:866px;width:1903px;height:39px;background:#fff;border-top:1px solid #aaa;"></div>
<div style="position:absolute;left:10px;top:881px;width:56px;height:16px;border-radius:8px;background:#8e8c84;"></div>
<div class="t nl" style="left:16.7px;top:880.96px;font-size:10.5px;line-height:14px;letter-spacing:-0.4px;-webkit-text-stroke:0.35px #fff;">Week: 20</div>
<div style="position:absolute;left:70px;top:881px;width:68px;height:16px;border-radius:8px;background:#8e8c84;"></div>
<div class="t nl" style="left:76.7px;top:880.96px;font-size:10.5px;line-height:14px;letter-spacing:0.2px;-webkit-text-stroke:0.35px #fff;">15/05/2024</div>
<div class="t b" style="left:943.6px;top:879.00px;font-size:13px;line-height:17px;">Demo</div>
<div style="position:absolute;left:984.6px;top:882px;width:1.2px;height:12px;background:#55564f;"></div>
<div style="position:absolute;left:990px;top:881px;width:63px;height:16px;border-radius:3px;background:#93c54b;"></div>
<div class="t nl" style="left:994.7px;top:881.83px;font-size:10px;line-height:13px;letter-spacing:-0.3px;-webkit-text-stroke:0.35px #fff;">ADVANCED</div>
<div class="t b" style="left:1763px;top:879.00px;font-size:13px;line-height:17px;color:#7fad37;letter-spacing:-0.2px;-webkit-text-stroke:0.2px #7fad37;">Fraction ERP</div>
<div class="t " style="left:1847.3px;top:878.15px;font-size:14px;line-height:18px;">© 2024</div>
<div class="sb"></div>
<div style="position:absolute;left:1905px;top:14px;width:13px;height:742px;background:#c1c1c1;"></div>
<div style="position:absolute;left:1907px;top:4px;width:0;height:0;border-left:4px solid transparent;border-right:4px solid transparent;border-bottom:4px solid #a3a3a3;"></div>
<div style="position:absolute;left:1907px;top:897px;width:0;height:0;border-left:4px solid transparent;border-right:4px solid transparent;border-top:4px solid #505050;"></div>
</body></html>
